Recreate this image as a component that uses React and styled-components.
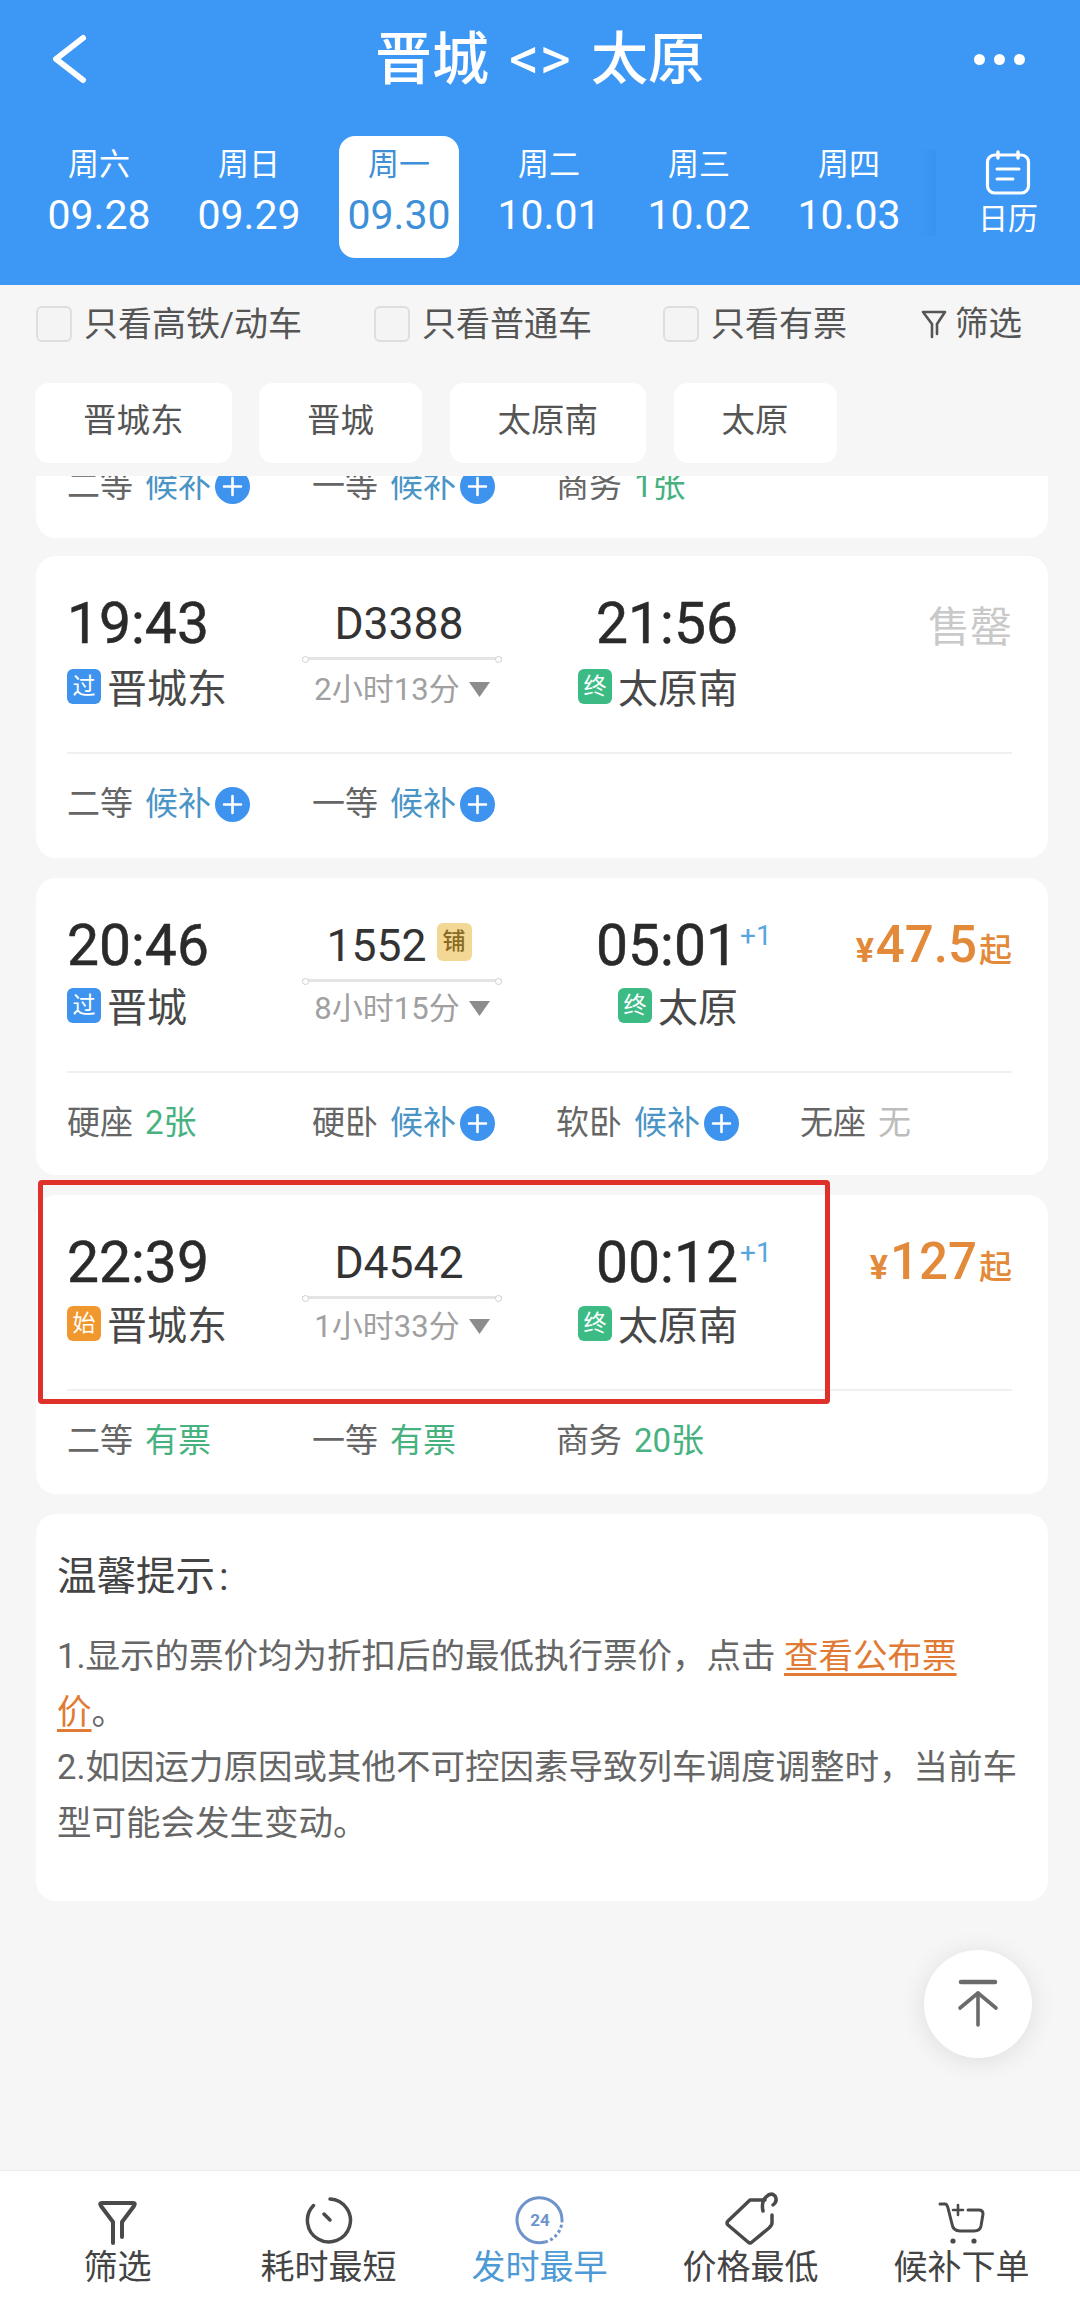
import React from "react";
import styled, { createGlobalStyle } from "styled-components";

const Global = createGlobalStyle`
  html, body { margin: 0; padding: 0; background: #f6f6f6; }
  * { box-sizing: border-box; }
  body { font-family: Roboto, "Noto Sans CJK SC", sans-serif; }
`;

const Page = styled.div`
  position: relative;
  width: 1080px;
  height: 2307px;
  overflow: hidden;
  display: flex;
  flex-direction: column;
  background: #f6f6f6;
  color: #444;
`;

/* ---------- header ---------- */
const Header = styled.header`
  flex: none;
  height: 285px;
  background: #3d97f5;
  color: #fff;
`;
const TitleBar = styled.div`
  height: 118px;
  display: grid;
  grid-template-columns: 1fr auto 1fr;
  align-items: center;
  padding: 0 50px;
`;
const BackIcon = styled.svg`
  display: block;
  width: 36px;
  height: 50px;
`;
const Title = styled.h1`
  margin: 0;
  font-size: 57px;
  font-weight: 500;
  line-height: 60px;
  word-spacing: 6px;
`;
const TitleSep = styled.span`
  font-weight: 400;
  font-size: 60px;
`;
const Dots = styled.div`
  justify-self: end;
  display: flex;
  gap: 9px;
  padding-right: 5px;
`;
const Dot = styled.span`
  width: 11px;
  height: 11px;
  border-radius: 50%;
  background: #fff;
`;
const DateRow = styled.div`
  margin-top: 18px;
  height: 122px;
  display: flex;
  padding-left: 39px;
  gap: 30px;
`;
const DateTab = styled.div`
  flex: none;
  width: 120px;
  height: 122px;
  padding-top: 9px;
  border-radius: 16px;
  text-align: center;
  background: ${(p) => (p.$active ? "#fff" : "transparent")};
  color: ${(p) => (p.$active ? "#3d8fd8" : "#fff")};
`;
const Weekday = styled.div`
  font-size: 31px;
  line-height: 40px;
`;
const DateNum = styled.div`
  margin-top: 5px;
  font-size: 41px;
  line-height: 50px;
`;
const CalendarCell = styled.div`
  flex: none;
  position: relative;
  width: 140px;
  margin-left: -1px;
  display: flex;
  flex-direction: column;
  align-items: center;
  padding-top: 14px;
  &::before {
    content: "";
    position: absolute;
    left: -18px;
    top: 14px;
    bottom: 22px;
    width: 16px;
    background: linear-gradient(90deg, rgba(40, 110, 190, 0), rgba(40, 110, 190, 0.12));
  }
`;
const CalendarIcon = styled.svg`
  display: block;
  width: 46px;
  height: 46px;
`;
const CalendarLabel = styled.div`
  margin-top: 3px;
  font-size: 30px;
  line-height: 40px;
`;

/* ---------- filters ---------- */
const FilterRow = styled.div`
  flex: none;
  height: 98px;
  display: grid;
  grid-template-columns: 338px 289px 257px 1fr;
  align-items: center;
  padding: 0 0 21px 36px;
`;
const CheckItem = styled.label`
  display: flex;
  align-items: center;
  gap: 12px;
  font-size: 34px;
  line-height: 40px;
  color: #555;
`;
const CheckBox = styled.span`
  width: 36px;
  height: 36px;
  border-radius: 6px;
  border: 2px solid #dedede;
  background: #f4f4f4;
`;
const FilterBtn = styled.div`
  display: flex;
  align-items: center;
  gap: 7px;
  font-size: 33.5px;
  line-height: 40px;
  color: #555;
`;
const SmallFunnel = styled.svg`
  display: block;
  width: 28px;
  height: 30px;
`;
const ChipRow = styled.div`
  flex: none;
  height: 80px;
  display: flex;
  gap: 27.5px;
  padding-left: 35px;
`;
const Chip = styled.div`
  height: 80px;
  padding: 0 48px;
  background: #fff;
  border-radius: 14px;
  font-size: 33.5px;
  line-height: 76px;
  color: #555;
`;

/* ---------- list ---------- */
const List = styled.main`
  flex: 1;
  min-height: 0;
  margin-top: 13px;
  overflow: hidden;
  display: flex;
  flex-direction: column;
  gap: 20px;
  padding: 0 32px 0 36px;
`;
const PartialCard = styled.section`
  flex: none;
  height: 62px;
  margin-bottom: -2px;
  overflow: hidden;
  background: #fff;
  border-radius: 0 0 20px 20px;
  padding-left: 31px;
`;
const Card = styled.section`
  flex: none;
  height: ${(p) => p.$h}px;
  background: #fff;
  border-radius: 20px;
  padding: 0 36px 0 31px;
`;
const TopRow = styled.div`
  height: ${(p) => p.$h}px;
  display: grid;
  grid-template-columns: 235px 200px 236px 1fr;
`;
const Col = styled.div`
  position: relative;
  display: flex;
  flex-direction: column;
  align-items: ${(p) => p.$align || "flex-start"};
  padding: 37px 0 48px;
`;
const TimeWrap = styled.div`
  position: relative;
`;
const Time = styled.div`
  font-size: 57px;
  line-height: 60px;
  height: 60px;
  margin-top: 1px;
  color: #2a2a2a;
  -webkit-text-stroke: 0.5px #2a2a2a;
`;
const PlusDay = styled.span`
  position: absolute;
  left: calc(100% + 2px);
  top: 8px;
  font-size: 28px;
  line-height: 26px;
  color: #58a6dc;
`;
const Station = styled.div`
  margin-top: auto;
  height: 36px;
  display: flex;
  align-items: center;
  gap: 6px;
  font-size: 40px;
  color: #484848;
`;
const Badge = styled.span`
  width: 34px;
  height: 35px;
  flex: none;
  border-radius: 6px;
  background: ${(p) => p.$bg};
  color: #fff;
  font-size: 23px;
  line-height: 35px;
  text-align: center;
`;
const TrainRow = styled.div`
  height: 60px;
  margin-top: 1px;
  margin-right: 6px;
  display: flex;
  align-items: center;
  gap: 10px;
  font-size: 44.5px;
  color: #333;
`;
const BerthTag = styled.span`
  width: 35px;
  height: 38px;
  margin-top: -8px;
  border-radius: 6px;
  background: #f3d794;
  color: #8a6b25;
  font-size: 23px;
  font-weight: 500;
  line-height: 38px;
  text-align: center;
`;
const Line = styled.div`
  position: relative;
  width: 200px;
  height: 3px;
  margin-top: 3px;
  background: #e4e4e4;
  &::before,
  &::after {
    content: "";
    position: absolute;
    top: -1px;
    width: 5px;
    height: 5px;
    border-radius: 50%;
    background: #fff;
    border: 1px solid #d0d0d0;
  }
  &::before { left: 0; }
  &::after { right: 0; }
`;
const Duration = styled.div`
  margin-top: auto;
  height: 36px;
  display: flex;
  align-items: center;
  gap: 9px;
  font-size: 31px;
  color: #a0a0a0;
`;
const Caret = styled.svg`
  display: block;
  width: 21px;
  height: 15px;
  margin-top: 6px;
`;
const Price = styled.div`
  display: flex;
  align-items: baseline;
  justify-content: flex-end;
  height: 60px;
  line-height: 60px;
  color: #e28a3a;
  font-weight: 500;
`;
const Yen = styled.span`
  font-size: 34px;
  font-weight: 700;
  margin-right: 2px;
`;
const Amount = styled.span`
  font-size: 51px;
`;
const Qi = styled.span`
  font-size: 33px;
  margin-left: 2px;
`;
const SoldOut = styled.div`
  align-self: flex-end;
  margin-top: 5px;
  font-size: 42px;
  line-height: 60px;
  color: #c9c9c9;
`;
const SeatRow = styled.div`
  height: 102px;
  display: grid;
  grid-template-columns: 245px 244px 244px 1fr;
  align-items: center;
  border-top: ${(p) => (p.$plain ? "none" : "2px solid #f0f0f0")};
  margin-top: ${(p) => (p.$plain ? "-41px" : "0")};
`;
const Seat = styled.div`
  display: flex;
  align-items: center;
  font-size: 33px;
  line-height: 40px;
  color: #666;
`;
const SeatStatus = styled.span`
  margin-left: 12px;
  color: ${(p) => p.$color};
`;
const PlusIcon = styled.svg`
  display: block;
  width: 35px;
  height: 35px;
  margin-left: 4px;
`;

/* ---------- tips ---------- */
const TipCard = styled.section`
  flex: none;
  height: 387px;
  background: #fff;
  border-radius: 20px;
  padding: 38px 28px 0 21px;
`;
const TipTitle = styled.div`
  font-size: 39.5px;
  line-height: 50px;
  color: #444;
`;
const TipColon = styled.span`
  margin-left: 4px;
`;
const TipBody = styled.p`
  margin: 27px 0 0;
  font-size: 34.5px;
  line-height: 55.5px;
  color: #666;
`;
const TipLink = styled.span`
  color: #e07a34;
  text-decoration: underline;
  text-decoration-thickness: 3px;
  text-underline-offset: 5px;
`;

/* ---------- overlays ---------- */
const ToTop = styled.div`
  position: absolute;
  left: 924px;
  top: 1950px;
  width: 108px;
  height: 108px;
  border-radius: 50%;
  background: #fff;
  box-shadow: 0 3px 26px rgba(0, 0, 0, 0.1);
  display: flex;
  align-items: center;
  justify-content: center;
`;
const ToTopIcon = styled.svg`
  display: block;
  width: 44px;
  height: 52px;
`;
const RedMark = styled.div`
  position: absolute;
  left: 38px;
  top: 1180px;
  width: 792px;
  height: 224px;
  border: 5px solid #e0302a;
  border-radius: 4px;
  pointer-events: none;
`;

/* ---------- tab bar ---------- */
const TabBar = styled.nav`
  flex: none;
  height: 137px;
  background: #fff;
  border-top: 1px solid #ececec;
  display: grid;
  grid-template-columns: repeat(5, 211px);
  padding: 15px 0 0 12px;
`;
const TabItem = styled.div`
  display: flex;
  flex-direction: column;
  align-items: center;
  color: ${(p) => (p.$active ? "#4d9ad6" : "#444")};
`;
const TabIconBox = styled.div`
  height: 60px;
  display: flex;
  align-items: flex-end;
  justify-content: center;
`;
const TabLabel = styled.div`
  font-size: 34px;
  line-height: 42px;
`;

const ink = { fill: "none", stroke: "#4a4a4a", strokeWidth: 3.5, strokeLinecap: "round", strokeLinejoin: "round" };

const Plus = () => (
  <PlusIcon viewBox="0 0 35 35">
    <circle cx="17.5" cy="17.5" r="17.5" fill="#3d93ee" />
    <path d="M17.5 9v17M9 17.5h17" stroke="#fff" strokeWidth="2.6" strokeLinecap="round" />
  </PlusIcon>
);

const Seats = ({ items, plain }) => (
  <SeatRow $plain={plain}>
    {items.map(([label, status, kind]) => (
      <Seat key={label}>
        {label}
        <SeatStatus $color={kind === "wait" ? "#4a94c6" : kind === "none" ? "#bdbdbd" : "#47b27f"}>{status}</SeatStatus>
        {kind === "wait" && <Plus />}
      </Seat>
    ))}
  </SeatRow>
);

const badgeColors = { 过: "#3d93ee", 终: "#3cbb85", 始: "#f0982e" };

const TrainCard = ({ h, top, dep, from, fromBadge, train, berth, dur, arr, to, next, price, seats }) => (
  <Card $h={h}>
    <TopRow $h={top}>
      <Col>
        <Time>{dep}</Time>
        <Station>
          <Badge $bg={badgeColors[fromBadge]}>{fromBadge}</Badge>
          {from}
        </Station>
      </Col>
      <Col $align="center">
        <TrainRow>
          {train}
          {berth && <BerthTag>{berth}</BerthTag>}
        </TrainRow>
        <Line />
        <Duration>
          {dur}
          <Caret viewBox="0 0 21 15">
            <path d="M0 0h21L10.5 15z" fill="#8c8c8c" />
          </Caret>
        </Duration>
      </Col>
      <Col $align="flex-end">
        <TimeWrap>
          <Time>{arr}</Time>
          {next && <PlusDay>+1</PlusDay>}
        </TimeWrap>
        <Station>
          <Badge $bg={badgeColors["终"]}>终</Badge>
          {to}
        </Station>
      </Col>
      <Col $align="stretch">
        {price ? (
          <Price>
            <Yen>¥</Yen>
            <Amount>{price}</Amount>
            <Qi>起</Qi>
          </Price>
        ) : (
          <SoldOut>售罄</SoldOut>
        )}
      </Col>
    </TopRow>
    <Seats items={seats} />
  </Card>
);

const Funnel = () => (
  <svg width="44" height="48" viewBox="0 0 44 48" {...ink} style={{ display: "block" }}>
    <path d="M6 5H37Q40 5 38 8L26 24V39M6 5Q3 5 5 8L17 24V45" strokeWidth="4" />
  </svg>
);
const Stopwatch = () => (
  <svg width="52" height="52" viewBox="0 0 52 52" {...ink} style={{ display: "block" }}>
    <path d="M27 5A21.5 21.5 0 1 1 10.5 11.5" />
    <path d="M21 20L27 26" />
  </svg>
);
const Clock24 = () => (
  <svg width="52" height="52" viewBox="0 0 52 52" style={{ display: "block" }}>
    <path d="M48 27A22.5 22.5 0 1 0 31 48" fill="none" stroke="#6f94cc" strokeWidth="3" />
    <path d="M31 48A22.5 22.5 0 0 0 48 27" fill="none" stroke="#6f94cc" strokeWidth="3" strokeDasharray="3 2.5" />
    <text x="26" y="32" textAnchor="middle" fontFamily="Roboto, sans-serif" fontWeight="700" fontSize="17" fill="#6f94cc">24</text>
  </svg>
);
const PriceTag = () => (
  <svg width="56" height="56" viewBox="0 0 56 56" {...ink} style={{ display: "block" }}>
    <path d="M42 10H27L5 31Q3 33 5 35L25 52Q27 54 29 52L46 38Q49 35 49 33V25" />
    <path d="M40 21Q38 12 43 7Q48 2 52 6Q55 11 50 15" />
  </svg>
);
const Cart = () => (
  <svg width="48" height="44" viewBox="0 0 48 44" {...ink} style={{ display: "block" }}>
    <path d="M2 2H7Q9 2 10 6L14 22Q15 29 22 29H36Q42 29 43 24L45 12Q45 8 41 8H30" strokeWidth="3" />
    <path d="M20 3V13M15 8H25" strokeWidth="2.6" />
    <circle cx="15" cy="39" r="2.6" fill="#4a4a4a" stroke="none" />
    <circle cx="36" cy="39" r="2.6" fill="#4a4a4a" stroke="none" />
  </svg>
);

const dates = [
  ["周六", "09.28"],
  ["周日", "09.29"],
  ["周一", "09.30", true],
  ["周二", "10.01"],
  ["周三", "10.02"],
  ["周四", "10.03"],
];

const tabs = [
  ["筛选", <Funnel />],
  ["耗时最短", <Stopwatch />],
  ["发时最早", <Clock24 />, true],
  ["价格最低", <PriceTag />],
  ["候补下单", <Cart />],
];

export default function App() {
  return (
    <Page>
      <Global />
      <Header>
        <TitleBar>
          <BackIcon viewBox="0 0 36 50">
            <path d="M33 4L6 25L33 46" fill="none" stroke="#fff" strokeWidth="6" strokeLinecap="round" strokeLinejoin="round" />
          </BackIcon>
          <Title>
            晋城 <TitleSep>&lt;&gt;</TitleSep> 太原
          </Title>
          <Dots>
            <Dot />
            <Dot />
            <Dot />
          </Dots>
        </TitleBar>
        <DateRow>
          {dates.map(([w, d, active]) => (
            <DateTab key={d} $active={active}>
              <Weekday>{w}</Weekday>
              <DateNum>{d}</DateNum>
            </DateTab>
          ))}
          <CalendarCell>
            <CalendarIcon viewBox="0 0 46 46" fill="none" stroke="#fff" strokeLinecap="round">
              <rect x="2.5" y="5" width="41" height="38" rx="7" strokeWidth="3.2" />
              <path d="M13 2v6M33 2v6" strokeWidth="3.4" />
              <path d="M12 19h22M12 29h16" strokeWidth="3" />
            </CalendarIcon>
            <CalendarLabel>日历</CalendarLabel>
          </CalendarCell>
        </DateRow>
      </Header>

      <FilterRow>
        <CheckItem>
          <CheckBox />
          只看高铁/动车
        </CheckItem>
        <CheckItem>
          <CheckBox />
          只看普通车
        </CheckItem>
        <CheckItem>
          <CheckBox />
          只看有票
        </CheckItem>
        <FilterBtn>
          <SmallFunnel viewBox="0 0 28 30" fill="none" stroke="#555" strokeWidth="2.6" strokeLinecap="round" strokeLinejoin="round">
            <path d="M3 3H25L17 15V25M3 3L12 15V28" />
          </SmallFunnel>
          筛选
        </FilterBtn>
      </FilterRow>

      <ChipRow>
        <Chip>晋城东</Chip>
        <Chip>晋城</Chip>
        <Chip>太原南</Chip>
        <Chip>太原</Chip>
      </ChipRow>

      <List>
        <PartialCard>
          <Seats
            plain
            items={[
              ["二等", "候补", "wait"],
              ["一等", "候补", "wait"],
              ["商务", "1张", "ok"],
            ]}
          />
        </PartialCard>

        <TrainCard
          h={302}
          top={196}
          dep="19:43"
          from="晋城东"
          fromBadge="过"
          train="D3388"
          dur="2小时13分"
          arr="21:56"
          to="太原南"
          seats={[
            ["二等", "候补", "wait"],
            ["一等", "候补", "wait"],
          ]}
        />
        <TrainCard
          h={297}
          top={193}
          dep="20:46"
          from="晋城"
          fromBadge="过"
          train="1552"
          berth="铺"
          dur="8小时15分"
          arr="05:01"
          to="太原"
          next
          price="47.5"
          seats={[
            ["硬座", "2张", "ok"],
            ["硬卧", "候补", "wait"],
            ["软卧", "候补", "wait"],
            ["无座", "无", "none"],
          ]}
        />
        <TrainCard
          h={299}
          top={194}
          dep="22:39"
          from="晋城东"
          fromBadge="始"
          train="D4542"
          dur="1小时33分"
          arr="00:12"
          to="太原南"
          next
          price="127"
          seats={[
            ["二等", "有票", "ok"],
            ["一等", "有票", "ok"],
            ["商务", "20张", "ok"],
          ]}
        />

        <TipCard>
          <TipTitle>
            温馨提示<TipColon>:</TipColon>
          </TipTitle>
          <TipBody>
            1.显示的票价均为折扣后的最低执行票价，点击 <TipLink>查看公布票价</TipLink>。
            <br />
            2.如因运力原因或其他不可控因素导致列车调度调整时，当前车型可能会发生变动。
          </TipBody>
        </TipCard>
      </List>

      <TabBar>
        {tabs.map(([label, icon, active]) => (
          <TabItem key={label} $active={active}>
            <TabIconBox>{icon}</TabIconBox>
            <TabLabel>{label}</TabLabel>
          </TabItem>
        ))}
      </TabBar>

      <ToTop>
        <ToTopIcon viewBox="0 0 44 52" fill="none" stroke="#6b6b6b" strokeLinecap="round" strokeLinejoin="round">
          <path d="M5 4H39" strokeWidth="4.5" />
          <path d="M4 30L22 15L40 30" strokeWidth="3.6" />
          <path d="M22 15V47" strokeWidth="3.6" />
        </ToTopIcon>
      </ToTop>
      <RedMark />
    </Page>
  );
}
